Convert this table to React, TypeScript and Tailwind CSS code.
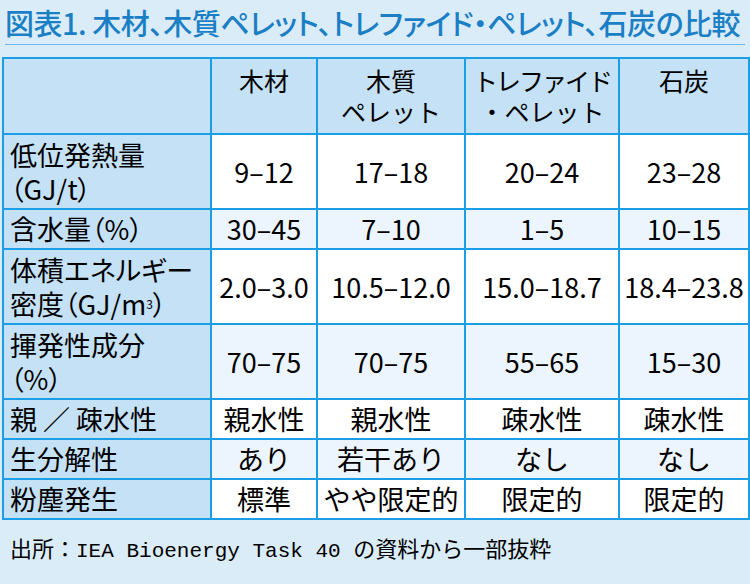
import React from "react";

const jp = { fontFamily: '"Noto Sans CJK JP", "Noto Sans", sans-serif' };

type Row = { label: React.ReactNode; values: string[]; tall?: boolean };

const rows: Row[] = [
  { label: <>低位発熱量<br />（GJ/t）</>, values: ["9–12", "17–18", "20–24", "23–28"], tall: true },
  { label: <>含水量（%）</>, values: ["30–45", "7–10", "1–5", "10–15"] },
  {
    label: (
      <>
        体積エネルギー
        <br />
        密度（GJ/m<sup className="text-[12px] relative -top-[6px]">3</sup>）
      </>
    ),
    values: ["2.0–3.0", "10.5–12.0", "15.0–18.7", "18.4–23.8"],
    tall: true,
  },
  { label: <>揮発性成分<br />（%）</>, values: ["70–75", "70–75", "55–65", "15–30"], tall: true },
  { label: <>親 ／ 疎水性</>, values: ["親水性", "親水性", "疎水性", "疎水性"] },
  { label: <>生分解性</>, values: ["あり", "若干あり", "なし", "なし"] },
  { label: <>粉塵発生</>, values: ["標準", "やや限定的", "限定的", "限定的"] },
];

export default function App() {
  return (
    <div className="w-[750px] h-[584px] bg-[#dbecf9] px-[2px] text-black" style={jp}>
      <div className="mx-[3px] h-[45px] border-b border-[#6db6e8] pt-[2px]">
        <h1 className="text-[29px] leading-[40px] font-medium text-[#1a7fc4] tracking-[-0.5px] whitespace-nowrap [font-feature-settings:'palt']">
          図表1. 木材、木質ペレット、トレファイド・ペレット、石炭の比較
        </h1>
      </div>
      <table className="mt-[12px] w-[746px] table-fixed border-collapse border-2 border-[#1b9ee6]">
        <colgroup>
          <col className="w-[208px]" />
          <col className="w-[106px]" />
          <col className="w-[148px]" />
          <col className="w-[154px]" />
          <col className="w-[130px]" />
        </colgroup>
        <thead>
          <tr className="h-[76px] bg-[#c5e1f6] text-[25px] leading-[31px] font-normal">
            <th className="border-2 border-[#1b9ee6]" />
            <th className="border-2 border-[#1b9ee6] align-top pt-[6px] font-normal">木材</th>
            <th className="border-2 border-[#1b9ee6] align-top pt-[6px] font-normal">
              木質
              <br />
              ペレット
            </th>
            <th className="border-2 border-[#1b9ee6] align-top pt-[6px] font-normal whitespace-nowrap">
              <span className="tracking-[-2px]">トレファイド</span>
              <br />
              ・ペレット
            </th>
            <th className="border-2 border-[#1b9ee6] align-top pt-[6px] font-normal">石炭</th>
          </tr>
        </thead>
        <tbody className="text-[27px]">
          {rows.map((row, i) => (
            <tr
              key={i}
              className={`${row.tall ? "h-[75px]" : "h-[40px]"} ${i % 2 === 1 || i === 3 ? "bg-[#ecf5fd]" : "bg-white"}`}
            >
              <td className="border-2 border-[#1b9ee6] bg-[#c5e1f6] pl-[6px] leading-[34px] whitespace-nowrap [font-feature-settings:'palt']">
                {row.label}
              </td>
              {row.values.map((v, j) => (
                <td key={j} className="border-2 border-[#1b9ee6] text-center leading-[34px] whitespace-nowrap">
                  {v}
                </td>
              ))}
            </tr>
          ))}
        </tbody>
      </table>
      <div className="pl-[8px] pt-[12px] text-[22px] leading-[30px] whitespace-nowrap">
        出所：<span style={{ fontFamily: '"Liberation Mono", monospace' }} className="text-[21px]">IEA Bioenergy Task 40 </span>の資料から一部抜粋
      </div>
    </div>
  );
}
